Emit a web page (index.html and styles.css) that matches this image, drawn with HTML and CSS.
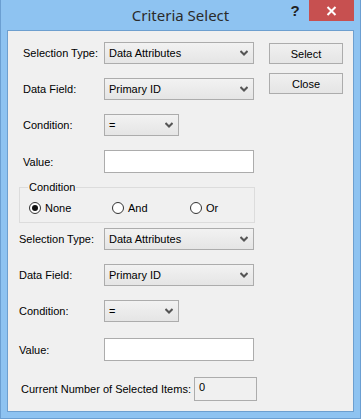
FILE: index.html
```html
<!DOCTYPE html>
<html lang="en">
    <head>
        <meta charset="UTF-8">
        <meta name="viewport" content="width=device-width, initial-scale=1.0">
        <title>Criteria Select</title>
        <link rel="stylesheet" href="styles.css">
    </head>
    <body>
        <div class="window">
            <div class="titlebar">
                <span></span>
                <span class="title">Criteria Select</span>
                <div class="caption-buttons">
                    <span class="help">?</span>
                    <span class="close">
                        <svg width="11" height="10" viewBox="0 0 11 10"><path d="M1.5 1 L9.5 9 M9.5 1 L1.5 9" stroke="#fff" stroke-width="2"/></svg>
                    </span>
                </div>
            </div>

            <div class="client">
                <div class="fields">
                    <div class="row first">
                        <label>Selection Type:</label>
                        <div class="combo"><span>Data Attributes</span><svg class="chev" width="8" height="6" viewBox="0 0 8 6"><path d="M0.5 1 L4 4.5 L7.5 1" stroke="#555" stroke-width="2" fill="none"/></svg></div>
                    </div>
                    <div class="row">
                        <label>Data Field:</label>
                        <div class="combo"><span>Primary ID</span><svg class="chev" width="8" height="6" viewBox="0 0 8 6"><path d="M0.5 1 L4 4.5 L7.5 1" stroke="#555" stroke-width="2" fill="none"/></svg></div>
                    </div>
                    <div class="row">
                        <label>Condition:</label>
                        <div class="combo short"><span>=</span><svg class="chev" width="8" height="6" viewBox="0 0 8 6"><path d="M0.5 1 L4 4.5 L7.5 1" stroke="#555" stroke-width="2" fill="none"/></svg></div>
                    </div>
                    <div class="row tall">
                        <label>Value:</label>
                        <div class="textbox"></div>
                    </div>

                    <fieldset class="group">
                        <legend>Condition</legend>
                        <div class="radios">
                            <span class="radio"><i class="dot checked"></i>None</span>
                            <span class="radio"><i class="dot"></i>And</span>
                            <span class="radio"><i class="dot"></i>Or</span>
                        </div>
                    </fieldset>

                    <div class="row low after-group">
                        <label>Selection Type:</label>
                        <div class="combo"><span>Data Attributes</span><svg class="chev" width="8" height="6" viewBox="0 0 8 6"><path d="M0.5 1 L4 4.5 L7.5 1" stroke="#555" stroke-width="2" fill="none"/></svg></div>
                    </div>
                    <div class="row low">
                        <label>Data Field:</label>
                        <div class="combo"><span>Primary ID</span><svg class="chev" width="8" height="6" viewBox="0 0 8 6"><path d="M0.5 1 L4 4.5 L7.5 1" stroke="#555" stroke-width="2" fill="none"/></svg></div>
                    </div>
                    <div class="row low">
                        <label>Condition:</label>
                        <div class="combo short"><span>=</span><svg class="chev" width="8" height="6" viewBox="0 0 8 6"><path d="M0.5 1 L4 4.5 L7.5 1" stroke="#555" stroke-width="2" fill="none"/></svg></div>
                    </div>
                    <div class="row low tall spaced">
                        <label>Value:</label>
                        <div class="textbox"></div>
                    </div>
                    <div class="row count">
                        <label>Current Number of Selected Items:</label>
                        <div class="readonly">0</div>
                    </div>
                </div>

                <div class="actions">
                    <button>Select</button>
                    <button>Close</button>
                </div>
            </div>
        </div>
    </body>
</html>
```

FILE: styles.css
```css
body {
    margin: 0;
    font-family: "Liberation Sans", Arial, sans-serif;
    font-size: 11px;
    color: #000;
}

.window {
    width: 361px;
    height: 419px;
    box-sizing: border-box;
    background-color: #8ec3f1;
    border: 1px solid #6b9fd2;
    border-top: none;
    display: flex;
    flex-direction: column;
}

/* title bar */
.titlebar {
    height: 30px;
    display: grid;
    grid-template-columns: 1fr auto 1fr;
    align-items: start;
}

.title {
    font-family: "Noto Sans", "Open Sans", sans-serif;
    font-size: 15px;
    color: #2b2b2b;
    line-height: 30px;
}

.caption-buttons {
    display: flex;
    justify-content: flex-end;
}

.help {
    width: 20px;
    margin-right: 4px;
    text-align: center;
    font-family: "Liberation Sans", Arial, sans-serif;
    font-weight: bold;
    font-size: 15px;
    line-height: 22px;
    color: #222;
}

.close {
    width: 45px;
    height: 21px;
    margin-right: 6px;
    background-color: #c75050;
    display: flex;
    align-items: center;
    justify-content: center;
}

/* client area */
.client {
    margin: 0 6px 6px 6px;
    height: 380px;
    background-color: #f0f0f0;
    border: 1px solid #6d9fcf;
    display: flex;
}

.fields {
    width: 246px;
}

.row {
    display: grid;
    grid-template-columns: 96px auto;
    align-items: center;
    height: 22px;
    margin-top: 14px;
}

.row label {
    padding-left: 15px;
}

.row.first {
    margin-top: 11px;
}

.row.tall {
    height: 23px;
}

.row.low label {
    padding-left: 11px;
}

.row.after-group {
    margin-top: 5px;
}

.row.spaced {
    margin-top: 16px;
}

.combo {
    width: 150px;
    height: 22px;
    box-sizing: border-box;
    border: 1px solid #acacac;
    background: linear-gradient(#f2f2f2, #e5e5e5);
    display: flex;
    align-items: center;
    justify-content: space-between;
    padding: 0 4px 0 4px;
}

.combo.short {
    width: 75px;
}

.chev {
    margin-right: 1px;
}

.textbox {
    width: 150px;
    height: 23px;
    box-sizing: border-box;
    border: 1px solid #acacac;
    background-color: white;
}

/* group box */
.group {
    margin: 8px 0 0 11px;
    width: 236px;
    box-sizing: border-box;
    border: 1px solid #dcdcdc;
    padding: 7px 0 6px 9px;
    height: 42px;
}

.group legend {
    padding: 0 1px;
    margin-left: -1px;
    line-height: 13px;
}

.radios {
    display: grid;
    grid-template-columns: 83px 78px auto;
    height: 14px;
    align-items: center;
}

.radio {
    display: flex;
    align-items: center;
    gap: 4px;
}

.dot {
    width: 12px;
    height: 12px;
    box-sizing: border-box;
    border-radius: 50%;
    border: 1px solid #333;
    background-color: white;
    display: flex;
    align-items: center;
    justify-content: center;
}

.dot.checked::after {
    content: "";
    width: 6px;
    height: 6px;
    border-radius: 50%;
    background-color: #111;
}

/* count row */
.row.count {
    grid-template-columns: 186px auto;
    height: 24px;
    margin-top: 16px;
}

.row.count label {
    padding-left: 13px;
}

.readonly {
    width: 63px;
    height: 24px;
    box-sizing: border-box;
    border: 1px solid #acacac;
    background-color: #f0f0f0;
    padding: 3px 0 0 4px;
}

/* buttons */
.actions {
    display: flex;
    flex-direction: column;
    gap: 9px;
    margin: 12px 0 0 15px;
}

button {
    width: 74px;
    height: 21px;
    border: 1px solid #acacac;
    background: linear-gradient(#f0f0f0, #e5e5e5);
    font-family: "Liberation Sans", Arial, sans-serif;
    font-size: 11px;
    color: #000;
    padding: 0;
}
```
